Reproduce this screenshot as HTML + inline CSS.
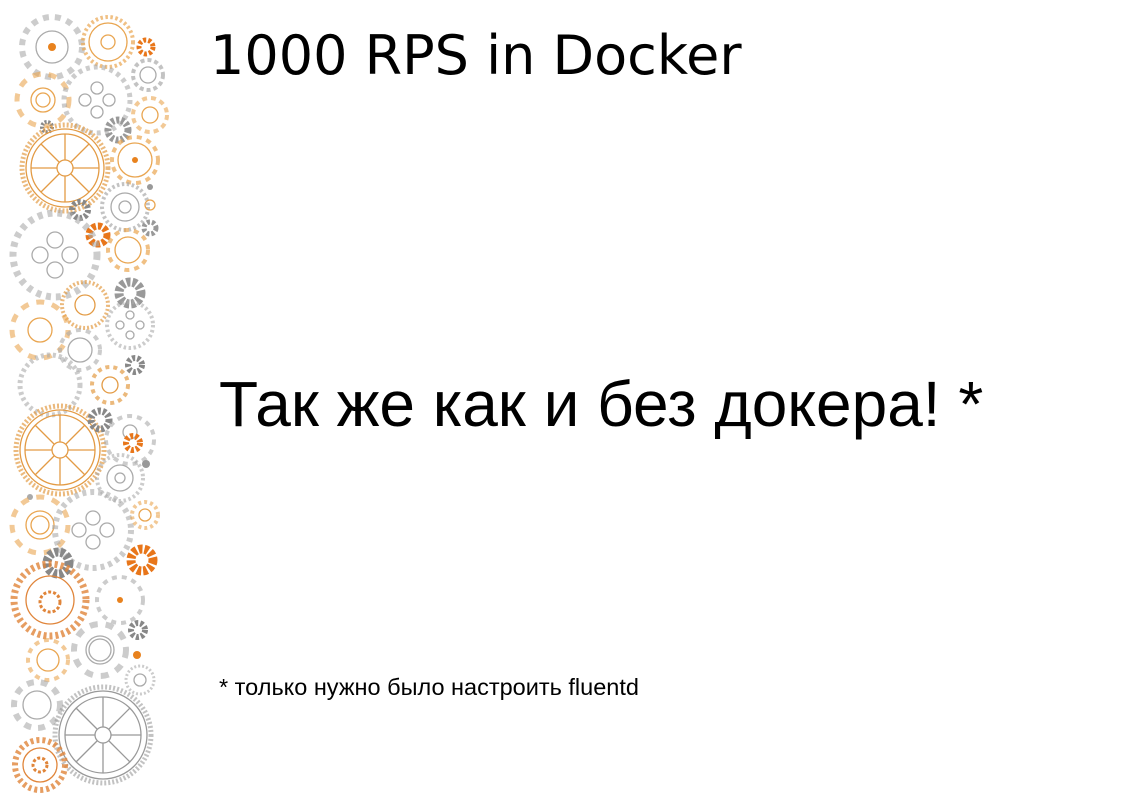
<!DOCTYPE html>
<html><head><meta charset="utf-8"><style>
body{margin:0;width:1121px;height:793px;background:#fff;position:relative;overflow:hidden;font-family:"Liberation Sans",sans-serif}
.t{position:absolute;left:210px;top:24px;font-family:"DejaVu Sans",sans-serif;font-size:54px;color:#000;white-space:nowrap}
.m{position:absolute;left:219px;top:367px;font-size:64px;white-space:nowrap}
.f{position:absolute;left:219px;top:674px;font-size:23.5px;white-space:nowrap}
svg{position:absolute;left:0;top:0}
</style></head><body>
<svg width="180" height="793" viewBox="0 0 180 793" fill="none">
<g stroke-width="1.3">
<g stroke="#aaa"><circle cx="52" cy="47" r="30" stroke-width="6" stroke-dasharray="6 6" opacity=".6"/><circle cx="52" cy="47" r="16"/></g>
<circle cx="52" cy="47" r="4" fill="#e8821e" stroke="none"/>
<g stroke="#e9a550"><circle cx="108" cy="42" r="25" stroke-width="4" stroke-dasharray="2.5 2.5" opacity=".7"/><circle cx="108" cy="42" r="19"/><circle cx="108" cy="42" r="7"/></g>
<circle cx="146" cy="47" r="7" stroke="#e8761a" stroke-width="5" stroke-dasharray="3 2"/>
<g stroke="#aaa"><circle cx="148" cy="75" r="15" stroke-width="4" stroke-dasharray="4 3" opacity=".7"/><circle cx="148" cy="75" r="8"/></g>
<g stroke="#e9a550"><circle cx="43" cy="100" r="26" stroke-width="5" stroke-dasharray="8 8" opacity=".6"/><circle cx="43" cy="100" r="12"/><circle cx="43" cy="100" r="7"/></g>
<g stroke="#aaa"><circle cx="97" cy="100" r="33" stroke-width="5" stroke-dasharray="4 4" opacity=".6"/><circle cx="97" cy="88" r="6"/><circle cx="97" cy="112" r="6"/><circle cx="85" cy="100" r="6"/><circle cx="109" cy="100" r="6"/></g>
<g stroke="#e9a550"><circle cx="150" cy="115" r="17" stroke-width="4" stroke-dasharray="5 4" opacity=".6"/><circle cx="150" cy="115" r="8"/></g>
<circle cx="118" cy="130" r="10" stroke="#999" stroke-width="7" stroke-dasharray="3 2"/>
<circle cx="47" cy="127" r="5" stroke="#888" stroke-width="4" stroke-dasharray="2 1.5"/>
<g stroke="#e39b45"><circle cx="65" cy="168" r="43" stroke-width="5" stroke-dasharray="2 2" opacity=".7"/><circle cx="65" cy="168" r="39"/><circle cx="65" cy="168" r="34"/><circle cx="65" cy="168" r="8"/>
<path d="M65 134V160M65 176V202M31 168H57M73 168H99M41 144L59 162M71 174L89 192M89 144L71 162M59 174L41 192"/></g>
<g stroke="#e9a550"><circle cx="135" cy="160" r="23" stroke-width="4" stroke-dasharray="5 5" opacity=".7"/><circle cx="135" cy="160" r="17"/></g>
<circle cx="135" cy="160" r="3" fill="#e8821e" stroke="none"/>
<g stroke="#aaa"><circle cx="125" cy="207" r="23" stroke-width="4" stroke-dasharray="2.5 2.5" opacity=".7"/><circle cx="125" cy="207" r="14"/><circle cx="125" cy="207" r="6"/></g>
<circle cx="80" cy="210" r="8" stroke="#888" stroke-width="6" stroke-dasharray="3 2"/>
<circle cx="98" cy="235" r="9" stroke="#e8761a" stroke-width="7" stroke-dasharray="4 2"/>
<circle cx="150" cy="205" r="5" stroke="#e9a550"/>
<circle cx="150" cy="187" r="3" fill="#999" stroke="none"/>
<circle cx="150" cy="228" r="6" stroke="#999" stroke-width="5" stroke-dasharray="3 2"/>
<g stroke="#aaa"><circle cx="55" cy="255" r="42" stroke-width="7" stroke-dasharray="5 5" opacity=".6"/><circle cx="55" cy="240" r="8"/><circle cx="55" cy="270" r="8"/><circle cx="40" cy="255" r="8"/><circle cx="70" cy="255" r="8"/></g>
<g stroke="#e9a550"><circle cx="128" cy="250" r="20" stroke-width="4" stroke-dasharray="5 5" opacity=".7"/><circle cx="128" cy="250" r="13"/></g>
<circle cx="130" cy="293" r="11" stroke="#999" stroke-width="9" stroke-dasharray="4 2"/>
<g stroke="#e39b45"><circle cx="85" cy="305" r="23" stroke-width="4" stroke-dasharray="2 2" opacity=".7"/><circle cx="85" cy="305" r="10"/></g>
<g stroke="#aaa"><circle cx="130" cy="325" r="23" stroke-width="4" stroke-dasharray="2.5 2.5" opacity=".6"/><circle cx="130" cy="315" r="4"/><circle cx="130" cy="335" r="4"/><circle cx="120" cy="325" r="4"/><circle cx="140" cy="325" r="4"/></g>
<g stroke="#e9a550"><circle cx="40" cy="330" r="28" stroke-width="5" stroke-dasharray="8 8" opacity=".6"/><circle cx="40" cy="330" r="12"/></g>
<g stroke="#aaa"><circle cx="80" cy="350" r="20" stroke-width="4" stroke-dasharray="5 5" opacity=".6"/><circle cx="80" cy="350" r="12"/></g>
<circle cx="135" cy="365" r="7" stroke="#888" stroke-width="6" stroke-dasharray="3 2"/>
<g stroke="#e39b45"><circle cx="110" cy="385" r="18" stroke-width="4" stroke-dasharray="4 4" opacity=".7"/><circle cx="110" cy="385" r="8"/></g>
<g stroke="#aaa"><circle cx="50" cy="385" r="30" stroke-width="5" stroke-dasharray="3 3" opacity=".6"/></g>
<g stroke="#e39b45"><circle cx="60" cy="450" r="44" stroke-width="5" stroke-dasharray="2 2" opacity=".7"/><circle cx="60" cy="450" r="40"/><circle cx="60" cy="450" r="35"/><circle cx="60" cy="450" r="8"/>
<path d="M60 415V442M60 458V485M25 450H52M68 450H95M35 425L54 444M66 456L85 475M85 425L66 444M54 456L35 475"/></g>
<circle cx="100" cy="420" r="9" stroke="#888" stroke-width="7" stroke-dasharray="3 2"/>
<g stroke="#aaa"><circle cx="130" cy="440" r="24" stroke-width="4" stroke-dasharray="5 5" opacity=".6"/><circle cx="130" cy="432" r="7"/></g>
<circle cx="133" cy="443" r="7" stroke="#e8761a" stroke-width="6" stroke-dasharray="3 2"/>
<g stroke="#aaa"><circle cx="120" cy="478" r="23" stroke-width="4" stroke-dasharray="2.5 2.5" opacity=".6"/><circle cx="120" cy="478" r="13"/><circle cx="120" cy="478" r="5"/></g>
<circle cx="146" cy="464" r="4" fill="#999" stroke="none"/>
<circle cx="30" cy="497" r="3" fill="#aaa" stroke="none"/>
<g stroke="#e9a550"><circle cx="40" cy="525" r="28" stroke-width="5" stroke-dasharray="8 8" opacity=".6"/><circle cx="40" cy="525" r="14"/><circle cx="40" cy="525" r="9"/></g>
<g stroke="#aaa"><circle cx="93" cy="530" r="38" stroke-width="6" stroke-dasharray="4 4" opacity=".6"/><circle cx="93" cy="518" r="7"/><circle cx="93" cy="542" r="7"/><circle cx="79" cy="530" r="7"/><circle cx="107" cy="530" r="7"/></g>
<g stroke="#e9a550"><circle cx="145" cy="515" r="13" stroke-width="4" stroke-dasharray="3 3" opacity=".6"/><circle cx="145" cy="515" r="6"/></g>
<circle cx="58" cy="563" r="11" stroke="#888" stroke-width="9" stroke-dasharray="4 2"/>
<circle cx="142" cy="560" r="11" stroke="#e8761a" stroke-width="9" stroke-dasharray="4 2"/>
<g stroke="#e0853a"><circle cx="50" cy="600" r="36" stroke-width="7" stroke-dasharray="3 3" opacity=".8"/><circle cx="50" cy="600" r="24"/><circle cx="50" cy="602" r="10" stroke-dasharray="3 2" stroke-width="3"/></g>
<g stroke="#aaa"><circle cx="120" cy="600" r="23" stroke-width="4" stroke-dasharray="5 5" opacity=".6"/></g>
<circle cx="120" cy="600" r="3" fill="#e8821e" stroke="none"/>
<circle cx="138" cy="630" r="7" stroke="#888" stroke-width="6" stroke-dasharray="3 2"/>
<g stroke="#e9a550"><circle cx="48" cy="660" r="20" stroke-width="4" stroke-dasharray="5 5" opacity=".6"/><circle cx="48" cy="660" r="11"/></g>
<g stroke="#aaa"><circle cx="100" cy="650" r="26" stroke-width="6" stroke-dasharray="8 8" opacity=".6"/><circle cx="100" cy="650" r="14"/><circle cx="100" cy="650" r="11"/></g>
<circle cx="137" cy="655" r="4" fill="#e8821e" stroke="none"/>
<g stroke="#aaa"><circle cx="140" cy="680" r="14" stroke-width="3" stroke-dasharray="2 2" opacity=".6"/><circle cx="140" cy="680" r="6"/></g>
<g stroke="#aaa"><circle cx="37" cy="705" r="23" stroke-width="6" stroke-dasharray="7 7" opacity=".6"/><circle cx="37" cy="705" r="14"/></g>
<g stroke="#999"><circle cx="103" cy="735" r="48" stroke-width="5" stroke-dasharray="2 2" opacity=".6"/><circle cx="103" cy="735" r="44"/><circle cx="103" cy="735" r="38"/><circle cx="103" cy="735" r="8"/>
<path d="M103 697V727M103 743V773M65 735H95M111 735H141M76 708L97 729M109 741L130 762M130 708L109 729M97 741L76 762"/></g>
<g stroke="#e0853a"><circle cx="40" cy="765" r="25" stroke-width="6" stroke-dasharray="3 3" opacity=".8"/><circle cx="40" cy="765" r="17"/><circle cx="40" cy="765" r="7" stroke-dasharray="3 2" stroke-width="3"/></g>
</g>
</svg>
<div class="t">1000 RPS in Docker</div>
<div class="m">Так же как и без докера! *</div>
<div class="f">* только нужно было настроить fluentd</div>
</body></html>
